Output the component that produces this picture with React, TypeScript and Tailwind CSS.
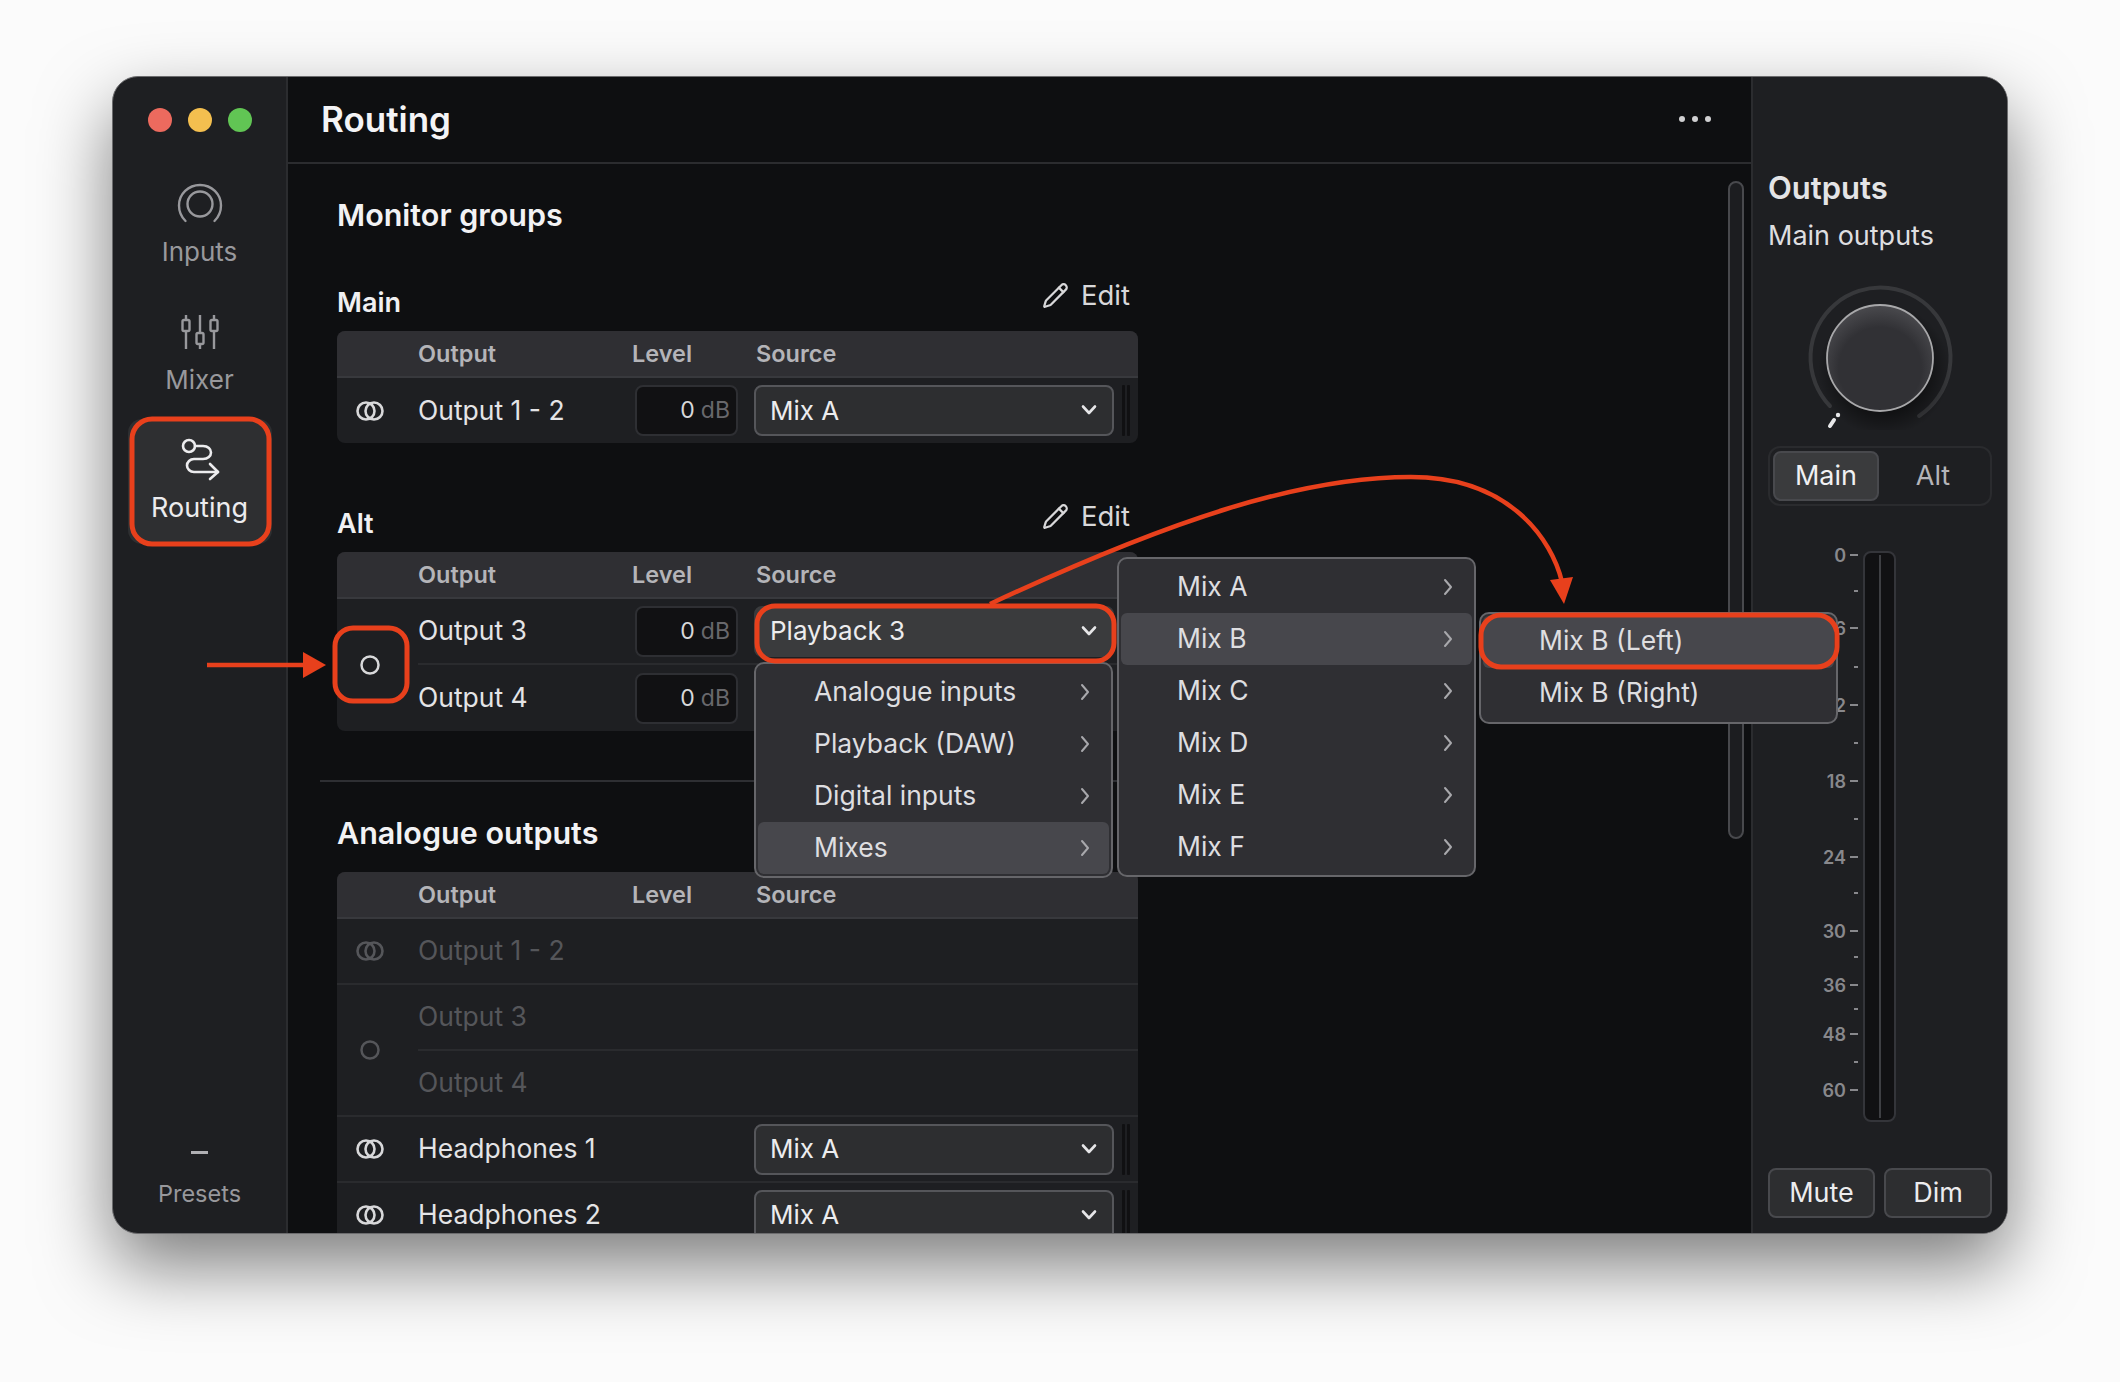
import React from "react";
import { Pencil } from "lucide-react";

const FONT = "[font-family:Inter,sans-serif]";

function Stereo({ dim }: { dim?: boolean }) {
  return (
    <svg width="30" height="22" viewBox="0 0 30 22" fill="none" stroke={dim ? "#55565a" : "#d8d8da"} strokeWidth="2.6">
      <circle cx="11" cy="11" r="8.5" />
      <circle cx="19" cy="11" r="8.5" />
    </svg>
  );
}

function Mono({ dim }: { dim?: boolean }) {
  return (
    <svg width="22" height="22" viewBox="0 0 22 22" fill="none" stroke={dim ? "#55565a" : "#d8d8da"} strokeWidth="2.5">
      <circle cx="11" cy="11" r="8.5" />
    </svg>
  );
}

function ChevronDown() {
  return (
    <svg width="18" height="12" viewBox="0 0 18 12" fill="none" stroke="#e6e6e8" strokeWidth="2.6" strokeLinecap="round" strokeLinejoin="round">
      <path d="M3 2.500 9 9l6-6.500" />
    </svg>
  );
}

function ChevronRight() {
  return (
    <svg width="12" height="20" viewBox="0 0 12 20" fill="none" stroke="#a8a8ac" strokeWidth="2" strokeLinecap="round" strokeLinejoin="round">
      <path d="M3 3l6 7-6 7" />
    </svg>
  );
}

function Select({ label, active }: { label: string; active?: boolean }) {
  return (
    <div className="flex items-center gap-[8px]">
      <div
        className={`flex h-[51px] w-[360px] items-center justify-between rounded-[8px] border-2 pb-[1px] pl-[14px] pr-[14px] text-[26px] text-[#ececee] ${
          active ? "border-[#3a3b3d] bg-[#3a3b3d]" : "border-[#55565a] bg-[#2d2e30]"
        }`}
      >
        <span>{label}</span>
        <ChevronDown />
      </div>
      <div className="flex h-[51px] gap-[2px]">
        <div className="w-[3px] rounded-[1px] bg-[#101012]" />
        <div className="w-[3px] rounded-[1px] bg-[#101012]" />
      </div>
    </div>
  );
}

function Level() {
  return (
    <div className="flex h-[51px] w-[103px] items-center justify-end rounded-[8px] border-2 border-[#2e2f33] bg-[#111113] pr-[6px] text-[23px] text-[#d8d8da]">
      <span>0</span>
      <span className="ml-[6px] text-[#68686c]">dB</span>
    </div>
  );
}

function THead() {
  return (
    <div className="flex h-[47px] items-center border-b-2 border-[#38393d] bg-[#2f2f33] text-[23.500px] font-semibold text-[#b4b4b8]">
      <div className="w-[81px]" />
      <div className="w-[214px]">Output</div>
      <div className="w-[124px]">Level</div>
      <div>Source</div>
    </div>
  );
}

function RowBody({ name, select, level, dim, active }: { name: string; select?: string; level?: boolean; dim?: boolean; active?: boolean }) {
  return (
    <div className="flex h-full flex-1 items-center">
      <div className={`w-[217px] text-[26.500px] ${dim ? "text-[#55565a]" : "text-[#e4e4e6]"}`}>{name}</div>
      <div className="w-[119px]">{level && <Level />}</div>
      {select && <Select label={select} active={active} />}
    </div>
  );
}

function Row({ name, select, level, dim, last }: { name: string; select?: string; level?: boolean; dim?: boolean; last?: boolean }) {
  return (
    <div className={`flex items-center ${last ? "h-[65px]" : "h-[66px] border-b-2 border-[#2a2b2e]"}`}>
      <div className="flex w-[81px] justify-center pr-[15px]">
        <Stereo dim={dim} />
      </div>
      <RowBody name={name} select={select} level={level} dim={dim} />
    </div>
  );
}

function MonoGroup({ a, b, level, dim, last, activeSelect }: { a: string; b: string; level?: boolean; dim?: boolean; last?: boolean; activeSelect?: string }) {
  return (
    <div className={`flex h-[132px] items-center ${last ? "" : "border-b-2 border-[#2a2b2e]"}`}>
      <div className="flex w-[81px] justify-center pr-[15px]">
        <Mono dim={dim} />
      </div>
      <div className="flex h-full flex-1 flex-col">
        <div className="h-[66px] border-b-2 border-[#2a2b2e]">
          <RowBody name={a} level={level} dim={dim} select={activeSelect} active />
        </div>
        <div className="min-h-0 flex-1">
          <RowBody name={b} level={level} dim={dim} />
        </div>
      </div>
    </div>
  );
}

function GroupTitle({ title, mt }: { title: string; mt: string }) {
  return (
    <div className={`flex h-[46px] w-[801px] items-start justify-between pr-[8px] ${mt}`}>
      <div className="text-[27px] font-semibold leading-[36px] text-[#f0f0f2]">{title}</div>
      <div className="flex -translate-y-[10px] items-center gap-[12px] text-[27.500px] leading-[40px] text-[#d8d8da]">
        <Pencil size={27} strokeWidth={2} />
        <span>Edit</span>
      </div>
    </div>
  );
}

function NavItem({ icon, label, active }: { icon: React.ReactNode; label: string; active?: boolean }) {
  return (
    <div className={`flex h-[125px] w-[144px] flex-col items-center rounded-[14px] pt-[19px] ${active ? "bg-[#2e2f31]" : ""}`}>
      <div className="flex h-[44px] items-center">{icon}</div>
      <div className={`mt-[10px] leading-[32px] ${active ? "text-[27px] text-[#ececee]" : "text-[26px] text-[#98989c]"}`}>{label}</div>
    </div>
  );
}

function Menu({ pos, items, hi }: { pos: string; items: string[]; hi: number }) {
  return (
    <div className={`absolute z-20 flex w-[359px] flex-col rounded-[10px] border-2 border-[#66666a] bg-[#2f2f33] p-[2px] text-[26.500px] text-[#dedee0] ${pos}`}>
      {items.map((t, i) => (
        <div
          key={t}
          className={`flex h-[52px] items-center justify-between rounded-[6px] pl-[56px] pr-[18px] ${i === hi ? "bg-[#47474c]" : ""}`}
        >
          <span className="pb-[1px]">{t}</span>
          <ChevronRight />
        </div>
      ))}
    </div>
  );
}

const TICKS: [number, string | null][] = [
  [555, "0"],
  [591, null],
  [628, "6"],
  [667, null],
  [705, "12"],
  [743, null],
  [781, "18"],
  [819, null],
  [857, "24"],
  [893, null],
  [931, "30"],
  [957, null],
  [985, "36"],
  [1009, null],
  [1034, "48"],
  [1062, null],
  [1090, "60"],
];

function Meter() {
  return (
    <div className="mt-[45px] flex justify-start">
      <div className="w-[95px] pr-[5px]">
        {TICKS.map(([y, l], i) => (
          <div
            key={y}
            className="flex h-[20px] items-center justify-end gap-[4px] text-[18px] font-semibold text-[#88888c]"
            style={{ marginTop: i === 0 ? -6 : y - TICKS[i - 1][0] - 20 }}
          >
            {l && <span>{l}</span>}
            <div className={`h-[2px] bg-[#88888c] ${l ? "w-[8px]" : "ml-[4px] w-[4px]"}`} />
          </div>
        ))}
      </div>
      <div className="flex h-[571px] w-[33px] justify-center rounded-[8px] border-2 border-[#34353a] bg-[#111113] py-[2px]">
        <div className="w-[2px] bg-[#3e3f43]" />
      </div>
    </div>
  );
}

export default function App() {
  return (
    <div className={`relative h-[1382px] w-[2120px] overflow-hidden bg-[#fbfbfb] ${FONT}`}>
      <div className="pl-[112px] pt-[76px]">
        <div className="flex h-[1158px] w-[1896px] overflow-hidden rounded-[26px] border border-[#6c6c6e] bg-[#1e1f22] shadow-[0_32px_72px_rgba(0,0,0,0.5)]">
          {/* Sidebar */}
          <div className="flex w-[175px] shrink-0 flex-col items-center border-r-2 border-[#2b2c2f]">
            <div className="mt-[31px] flex gap-[16px]">
              <div className="h-[24px] w-[24px] rounded-full bg-[#ec6a5e]" />
              <div className="h-[24px] w-[24px] rounded-full bg-[#f4bf4f]" />
              <div className="h-[24px] w-[24px] rounded-full bg-[#61c554]" />
            </div>
            <div className="mt-[31px] flex flex-col gap-[3px]">
              <NavItem
                label="Inputs"
                icon={
                  <svg width="46" height="42" viewBox="0 0 46 42" fill="none" stroke="#98989c" strokeLinecap="round">
                    <circle cx="23" cy="21" r="12.500" strokeWidth="2.400" />
                    <path d="M8.500 38C4.400 34 2 28.500 2 22.500 2 11 11.400 2 23 2s21 9 21 20.500c0 6-2.400 11.500-6.500 15.500" strokeWidth="2.400" />
                  </svg>
                }
              />
              <NavItem
                label="Mixer"
                icon={
                  <svg width="38" height="36" viewBox="0 0 38 36" fill="none" stroke="#98989c" strokeWidth="2.400">
                    <path d="M5 1v5M5 17v18M19 1v18M19 30v5M33 1v5M33 17v18" />
                    <rect x="1.500" y="6" width="7" height="11" rx="1.500" />
                    <rect x="15.500" y="19" width="7" height="11" rx="1.500" />
                    <rect x="29.500" y="6" width="7" height="11" rx="1.500" />
                  </svg>
                }
              />
              <NavItem
                active
                label="Routing"
                icon={
                  <svg width="40" height="44" viewBox="0 0 40 44" fill="none" stroke="#ececee" strokeWidth="2.600" strokeLinecap="round" strokeLinejoin="round">
                    <circle cx="9" cy="8" r="6" />
                    <path d="M15 8h8c5 0 8 3 8 6.500S28 21 23 21h-9c-4 0-7 3-7 6.500S10 34 14 34h24" />
                    <path d="M30 26l8 8-8 7" />
                  </svg>
                }
              />
            </div>
            <div className="mt-auto mb-[23px] flex flex-col items-center">
              <div className="h-[3px] w-[17px] bg-[#b0b0b4]" />
              <div className="mt-[24px] text-[23.500px] leading-[32px] text-[#98989c]">Presets</div>
            </div>
          </div>

          {/* Main */}
          <div className="flex min-w-0 flex-1 flex-col bg-[#0e0f11]">
            <div className="flex h-[87px] shrink-0 items-center justify-between border-b-2 border-[#2b2c2f] pb-[1px] pl-[33px] pr-[40px]">
              <div className="text-[35px] font-semibold text-[#f4f4f6]">Routing</div>
              <div className="flex gap-[7px]">
                <div className="h-[6px] w-[6px] rounded-full bg-[#d0d0d2]" />
                <div className="h-[6px] w-[6px] rounded-full bg-[#d0d0d2]" />
                <div className="h-[6px] w-[6px] rounded-full bg-[#d0d0d2]" />
              </div>
            </div>
            <div className="flex min-h-0 flex-1 overflow-hidden pl-[49px]">
              <div className="w-[801px] shrink-0">
                <div className="mt-[31px] h-[40px] text-[30.500px] font-semibold leading-[40px] text-[#f2f2f4]">Monitor groups</div>
                <GroupTitle title="Main" mt="mt-[50px]" />
                <div className="overflow-hidden rounded-[8px] bg-[#1e1f22]">
                  <THead />
                  <Row name="Output 1 - 2" level select="Mix A" last />
                </div>
                <GroupTitle title="Alt" mt="mt-[63px]" />
                <div className="overflow-hidden rounded-[8px] bg-[#1e1f22]">
                  <THead />
                  <MonoGroup a="Output 3" b="Output 4" level last activeSelect="Playback 3" />
                </div>
                <div className="-ml-[17px] mt-[49px] h-[2px] w-[835px] bg-[#2e2f33]" />
                <div className="mt-[31px] h-[40px] text-[30.500px] font-semibold leading-[40px] text-[#f2f2f4]">Analogue outputs</div>
                <div className="mt-[19px] overflow-hidden rounded-t-[8px] bg-[#1e1f22]">
                  <THead />
                  <Row name="Output 1 - 2" dim />
                  <MonoGroup a="Output 3" b="Output 4" dim />
                  <Row name="Headphones 1" select="Mix A" />
                  <Row name="Headphones 2" select="Mix A" />
                </div>
              </div>
              <div className="ml-auto mr-[7px] mt-[17px] h-[658px] w-[16px] rounded-full border-2 border-[#48494d] bg-[#1c1d20]" />
            </div>
          </div>

          {/* Right panel */}
          <div className="flex w-[256px] shrink-0 flex-col border-l-2 border-[#2b2c2f] bg-[#1e1f22] px-[15px] pb-[15px] pt-[91px]">
            <div className="h-[40px] text-[31px] font-semibold leading-[40px] text-[#e4e4e6]">Outputs</div>
            <div className="mt-[10px] h-[36px] whitespace-nowrap text-[27px] leading-[36px] text-[#dedee0]">Main outputs</div>
            <div className="mt-[26px] flex justify-center">
              <svg width="160" height="150" viewBox="0 0 160 150" fill="none">
                <defs>
                  <radialGradient id="knob" cx="50%" cy="60%" r="60%">
                    <stop offset="65%" stopColor="#313135" />
                    <stop offset="100%" stopColor="#4a4a4e" />
                  </radialGradient>
                  <radialGradient id="shade" cx="50%" cy="50%" r="50%">
                    <stop offset="60%" stopColor="#000000" stopOpacity="0.5" />
                    <stop offset="100%" stopColor="#000000" stopOpacity="0" />
                  </radialGradient>
                </defs>
                <path d="M30 126A70 70 0 1 1 119 136" stroke="#37383b" strokeWidth="4" strokeLinecap="round" />
                <circle cx="84" cy="90" r="66" fill="url(#shade)" />
                <circle cx="80" cy="78" r="53" fill="url(#knob)" stroke="#a8a8aa" strokeWidth="1.800" />
                <path d="M30 146 34 140" stroke="#e8e8ea" strokeWidth="4" strokeLinecap="round" />
                <circle cx="38" cy="135" r="2.200" fill="#e8e8ea" />
              </svg>
            </div>
            <div className="mt-[16px] flex h-[60px] rounded-[12px] border-2 border-[#2a2b2e] p-[3px] text-[27px]">
              <div className="flex w-[106px] items-center justify-center rounded-[8px] border-2 border-[#48494d] bg-[#3a3b3d] text-[#f0f0f2]">Main</div>
              <div className="flex flex-1 items-center justify-center text-[#b4b4b8]">Alt</div>
            </div>
            <Meter />
            <div className="mt-auto flex gap-[9px]">
              <div className="flex h-[50px] w-[107px] items-center justify-center rounded-[8px] border-2 border-[#48494d] bg-[#2d2e30] text-[27px] text-[#ececee]">Mute</div>
              <div className="flex h-[50px] w-[108px] items-center justify-center rounded-[8px] border-2 border-[#48494d] bg-[#2d2e30] text-[27px] text-[#ececee]">Dim</div>
            </div>
          </div>
        </div>
      </div>

      {/* Open menus */}
      <Menu pos="left-[754px] top-[662px]" hi={3} items={["Analogue inputs", "Playback (DAW)", "Digital inputs", "Mixes"]} />
      <Menu pos="left-[1117px] top-[557px]" hi={1} items={["Mix A", "Mix B", "Mix C", "Mix D", "Mix E", "Mix F"]} />
      <div className="absolute left-[1479px] top-[612px] z-20 flex w-[359px] flex-col rounded-[10px] border-2 border-[#66666a] bg-[#2f2f33] p-[2px] text-[26.500px] text-[#dedee0]">
        <div className="flex h-[52px] items-center rounded-[6px] bg-[#47474c] pb-[2px] pl-[56px]">Mix B (Left)</div>
        <div className="flex h-[52px] items-center pb-[2px] pl-[56px]">Mix B (Right)</div>
      </div>

      {/* Red annotations */}
      <svg className="pointer-events-none absolute left-0 top-0 z-30" width="2120" height="1382" viewBox="0 0 2120 1382" fill="none">
        <g stroke="#e8401c" strokeWidth="5">
          <rect x="132" y="419" width="137" height="125" rx="20" />
          <rect x="335" y="628" width="72" height="73" rx="18" />
          <rect x="757" y="606" width="357" height="55" rx="18" />
          <rect x="1481" y="615" width="356" height="52" rx="20" />
          <path d="M990 604C1170 520 1300 477 1411 477 1510 477 1552 540 1562 582" strokeWidth="4.500" />
          <path d="M207 665H306" strokeWidth="4.500" />
        </g>
        <path d="M1564 604 1550 580 1573 577Z" fill="#e8401c" />
        <path d="M326 665 303 652V678Z" fill="#e8401c" />
      </svg>
    </div>
  );
}
